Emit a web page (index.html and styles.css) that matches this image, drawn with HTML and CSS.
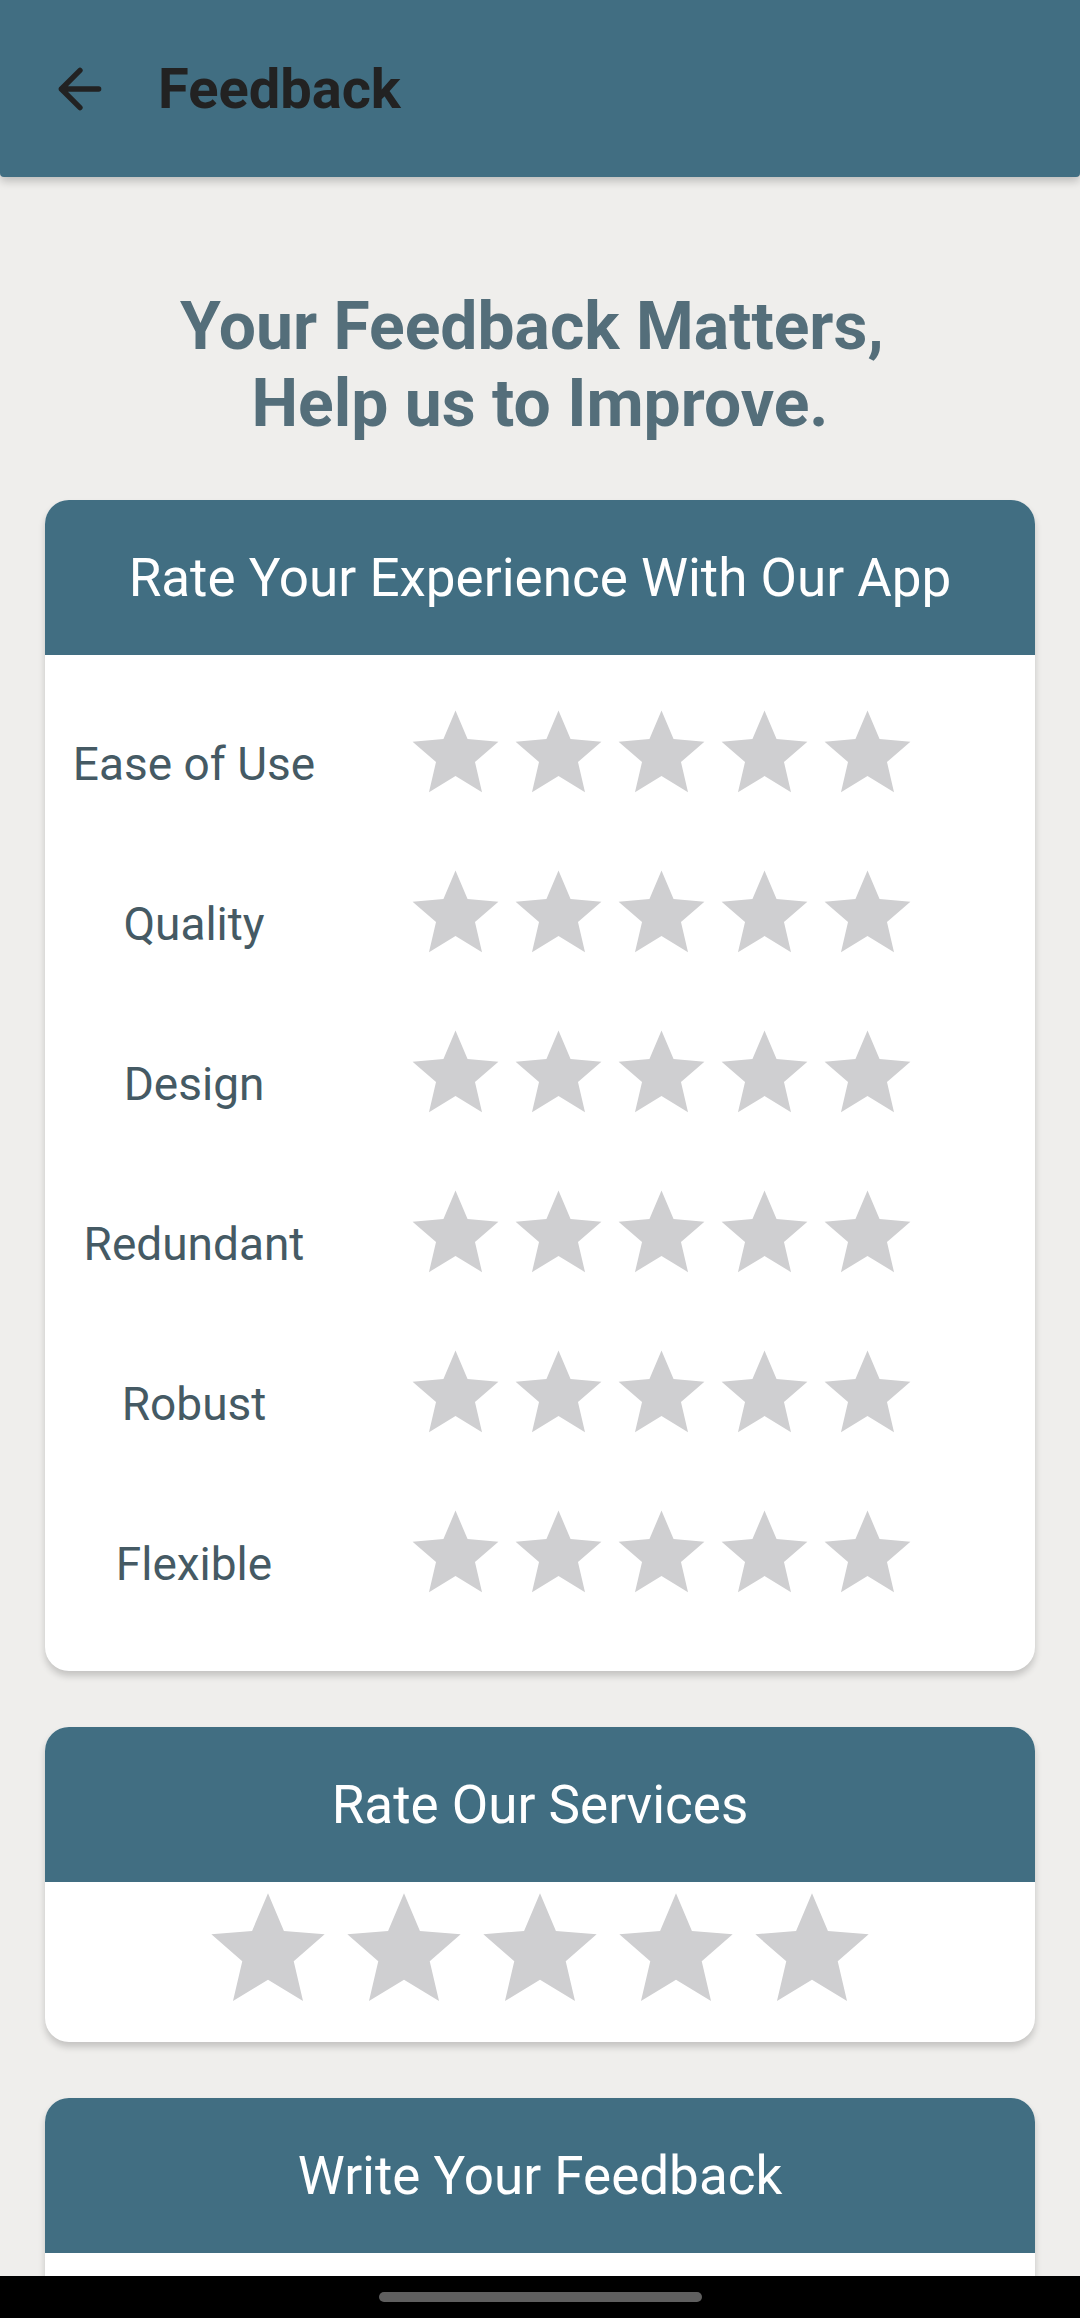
FILE: index.html
```html
<!DOCTYPE html>
<html lang="en">
<head>
<meta charset="utf-8">
<title>Feedback</title>
<link rel="stylesheet" href="styles.css">
</head>
<body>
<svg class="defs" width="0" height="0" aria-hidden="true">
  <symbol id="star" viewBox="0 0 24 24">
    <path d="M12 17.27L18.18 21l-1.64-7.03L22 9.24l-7.19-.61L12 2 9.19 8.63 2 9.24l5.46 4.73L5.82 21z"/>
  </symbol>
</svg>
<header class="appbar">
  <svg class="back" viewBox="0 0 24 24" aria-hidden="true">
    <path d="M19 12H5M12 5l-7 7 7 7" fill="none" stroke="currentColor" stroke-width="2" stroke-linecap="round" stroke-linejoin="round"/>
  </svg>
  <h1 class="title">Feedback</h1>
</header>
<main class="content">
  <h2 class="headline">Your Feedback Matters,&nbsp;<br>Help us to Improve.</h2>

  <section class="card">
    <div class="card-head">Rate Your Experience With Our App</div>
    <div class="card-body rows">
      <div class="row"><span class="label">Ease of Use</span><div class="stars"><svg class="star"><use href="#star"/></svg><svg class="star"><use href="#star"/></svg><svg class="star"><use href="#star"/></svg><svg class="star"><use href="#star"/></svg><svg class="star"><use href="#star"/></svg></div></div>
      <div class="row"><span class="label">Quality</span><div class="stars"><svg class="star"><use href="#star"/></svg><svg class="star"><use href="#star"/></svg><svg class="star"><use href="#star"/></svg><svg class="star"><use href="#star"/></svg><svg class="star"><use href="#star"/></svg></div></div>
      <div class="row"><span class="label">Design</span><div class="stars"><svg class="star"><use href="#star"/></svg><svg class="star"><use href="#star"/></svg><svg class="star"><use href="#star"/></svg><svg class="star"><use href="#star"/></svg><svg class="star"><use href="#star"/></svg></div></div>
      <div class="row"><span class="label">Redundant</span><div class="stars"><svg class="star"><use href="#star"/></svg><svg class="star"><use href="#star"/></svg><svg class="star"><use href="#star"/></svg><svg class="star"><use href="#star"/></svg><svg class="star"><use href="#star"/></svg></div></div>
      <div class="row"><span class="label">Robust</span><div class="stars"><svg class="star"><use href="#star"/></svg><svg class="star"><use href="#star"/></svg><svg class="star"><use href="#star"/></svg><svg class="star"><use href="#star"/></svg><svg class="star"><use href="#star"/></svg></div></div>
      <div class="row"><span class="label">Flexible</span><div class="stars"><svg class="star"><use href="#star"/></svg><svg class="star"><use href="#star"/></svg><svg class="star"><use href="#star"/></svg><svg class="star"><use href="#star"/></svg><svg class="star"><use href="#star"/></svg></div></div>
    </div>
  </section>

  <section class="card">
    <div class="card-head">Rate Our Services</div>
    <div class="card-body services">
      <svg class="star big"><use href="#star"/></svg><svg class="star big"><use href="#star"/></svg><svg class="star big"><use href="#star"/></svg><svg class="star big"><use href="#star"/></svg><svg class="star big"><use href="#star"/></svg>
    </div>
  </section>

  <section class="card">
    <div class="card-head">Write Your Feedback</div>
    <div class="card-body write"></div>
  </section>
</main>
<div class="navbar"><span class="pill"></span></div>
</body>
</html>
```
FILE: styles.css
```css
html, body {
  margin: 0;
  padding: 0;
  height: 2318px;
  overflow: hidden;
}
body {
  background: #efeeec;
  font-family: Roboto, "Noto Sans", "Liberation Sans", sans-serif;
}
.defs {
  position: absolute;
  width: 0;
  height: 0;
}
.appbar {
  height: 177px;
  background: #416e82;
  display: flex;
  align-items: center;
  padding-left: 48px;
  box-sizing: border-box;
  box-shadow: 0 4px 10px rgba(0, 0, 0, 0.22);
  border-radius: 0 0 4px 4px;
  position: relative;
  z-index: 1;
}
.back {
  width: 64px;
  height: 64px;
  color: #222222;
  flex: none;
}
.title {
  margin: 0 0 0 46px;
  font-size: 56px;
  font-weight: 700;
  color: #222222;
  line-height: 1;
}
.content {
  padding: 0 45px;
}
.headline {
  margin: 111px 0 0;
  font-size: 66px;
  line-height: 77px;
  font-weight: 700;
  color: #546e7a;
  text-align: center;
}
.card {
  margin-top: 58px;
  background: #ffffff;
  border-radius: 24px;
  overflow: hidden;
  box-shadow: 0 5px 7px rgba(0, 0, 0, 0.18);
}
.card + .card {
  margin-top: 56px;
}
.card-head {
  height: 155px;
  background: #416e82;
  color: #ffffff;
  font-size: 53px;
  display: flex;
  align-items: center;
  justify-content: center;
}
.rows {
  padding: 47px 0 66px;
  display: flex;
  flex-direction: column;
  gap: 57px;
}
.row {
  display: grid;
  grid-template-columns: 298px auto;
  column-gap: 61px;
  align-items: start;
}
.label {
  padding-top: 36px;
  font-size: 46px;
  line-height: 53px;
  color: #455a64;
  text-align: center;
}
.stars {
  display: flex;
}
.star {
  width: 103px;
  height: 103px;
  fill: #cfcfd1;
  flex: none;
}
.star.big {
  width: 136px;
  height: 136px;
}
.services {
  display: flex;
  justify-content: center;
  padding-bottom: 24px;
}
.write {
  height: 300px;
}
.navbar {
  position: fixed;
  left: 0;
  right: 0;
  bottom: 0;
  height: 42px;
  background: #000000;
  display: flex;
  justify-content: center;
  padding-top: 16px;
  box-sizing: border-box;
  z-index: 5;
}
.pill {
  width: 323px;
  height: 10px;
  border-radius: 5px;
  background: #5f5f5f;
}
```
